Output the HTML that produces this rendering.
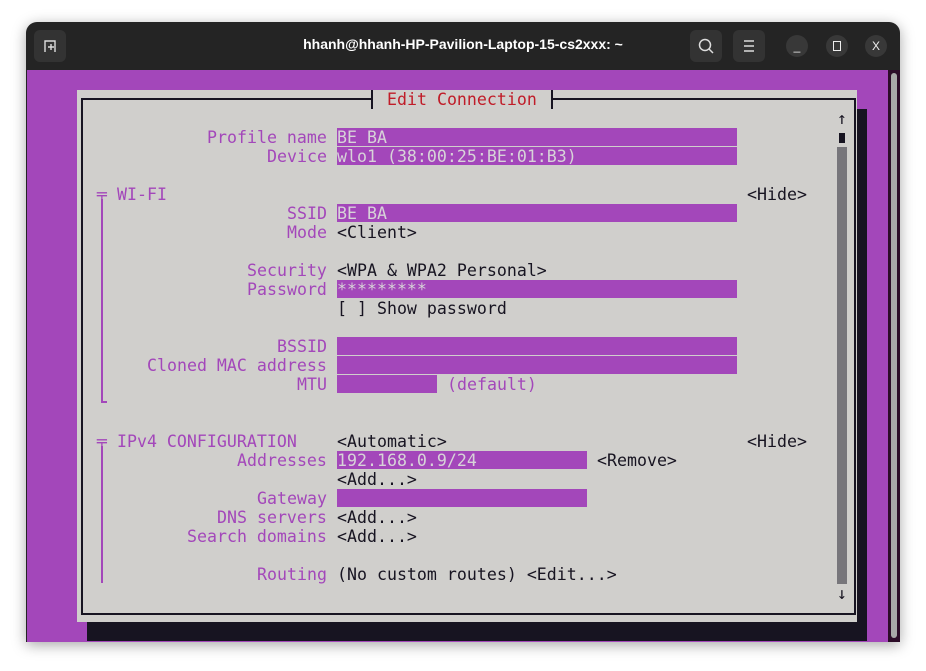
<!DOCTYPE html>
<html><head><style>
body{margin:0;width:926px;height:671px;background:#fff;position:relative;overflow:hidden;font-family:"DejaVu Sans Mono","Liberation Mono",monospace;}
.win{position:absolute;left:26px;top:22px;width:874px;height:620px;border-radius:11px 11px 0 0;background:#242424;box-shadow:0 3px 14px rgba(0,0,0,.35);overflow:hidden}
.t{position:absolute;font-size:16.6px;line-height:19px;height:19px;white-space:pre;color:#171421}
.p{color:#a347ba}
.f{position:absolute;height:18px;background:#a347ba}
.fv{position:absolute;font-size:16.6px;line-height:19px;white-space:pre;color:#d7d3d8}
.r{color:#c01c28}
.btn{position:absolute;top:8px;width:32px;height:32px;border-radius:6px;background:#333}
.cb{position:absolute;top:13px;width:22px;height:22px;border-radius:50%;background:#383838;color:#eee;font:12px "Liberation Sans",sans-serif;text-align:center;line-height:22px}
.abs{position:absolute}
</style></head><body>
<div class="win">
 <div class="btn" style="left:8px"><svg width="32" height="32"><path d="M11 22V11h10v11M14 17h6M17 14v6" stroke="#ddd" stroke-width="1.4" fill="none"/></svg></div>
 <div style="position:absolute;left:0;width:874px;top:14px;text-align:center;color:#fff;font:bold 14px 'Liberation Sans',sans-serif">hhanh@hhanh-HP-Pavilion-Laptop-15-cs2xxx: ~</div>
 <div class="btn" style="left:664px"><svg width="32" height="32"><circle cx="15" cy="15" r="5.5" stroke="#ddd" stroke-width="1.5" fill="none"/><path d="M19 19l4 4" stroke="#ddd" stroke-width="1.5"/></svg></div>
 <div class="btn" style="left:707px"><svg width="32" height="32"><path d="M11 11h10M11 16h10M11 21h10" stroke="#ddd" stroke-width="1.4"/></svg></div>
 <div class="cb" style="left:760px">_</div>
 <div class="cb" style="left:800px"><div style="position:absolute;left:7px;top:6px;width:6px;height:8px;border:1.5px solid #eee"></div></div>
 <div class="cb" style="left:839px">X</div>
 <div class="abs" style="left:1px;top:48px;width:861px;height:572px;background:#a347ba"></div>
 <div class="abs" style="left:862px;top:48px;width:12px;height:572px;background:#2c0c28"></div>
 <div class="abs" style="left:865px;top:51px;width:6px;height:565px;border-radius:3px;background:#a8a8a8"></div>
</div>
<div class="abs" style="left:857px;top:109px;width:10px;height:532px;background:#171421"></div>
<div class="abs" style="left:87px;top:622px;width:780px;height:19px;background:#171421"></div>
<div class="abs" style="left:77px;top:90px;width:780px;height:532px;background:#d0cfcc"></div>
<!-- border -->
<div class="abs" style="left:81px;top:98px;width:771px;height:513px;border:2px solid #171421"></div>
<div class="abs" style="left:372px;top:90px;width:180px;height:19px;background:#d0cfcc"></div>
<div class="abs" style="left:371px;top:90px;width:2px;height:19px;background:#171421"></div>
<div class="abs" style="left:551px;top:90px;width:2px;height:19px;background:#171421"></div>
<div class="t r" style="left:387px;top:90px">Edit Connection</div>
<!-- scrollbar -->
<div class="t" style="left:837px;top:109px">↑</div>
<div class="abs" style="left:839px;top:133px;width:6px;height:10px;background:#171421"></div>
<div class="abs" style="left:837px;top:147px;width:10px;height:437px;background:#77767b"></div>
<div class="t" style="left:837px;top:584px">↓</div>

<div class="t p" style="left:207px;top:128px">Profile name</div>
<div class="f" style="left:337px;top:128px;width:400px"></div><div class="fv" style="left:337px;top:128px">BE BA</div>
<div class="t p" style="left:267px;top:147px">Device</div>
<div class="f" style="left:337px;top:147px;width:400px"></div><div class="fv" style="left:337px;top:147px">wlo1 (38:00:25:BE:01:B3)</div>

<div class="t p" style="left:97px;top:185px">╤ WI-FI</div>
<div class="abs" style="left:101px;top:199px;width:2px;height:204px;background:#a347ba"></div>
<div class="abs" style="left:101px;top:401px;width:6px;height:2px;background:#a347ba"></div>
<div class="t" style="left:747px;top:185px">&lt;Hide&gt;</div>
<div class="t p" style="left:287px;top:204px">SSID</div>
<div class="f" style="left:337px;top:204px;width:400px"></div><div class="fv" style="left:337px;top:204px">BE BA</div>
<div class="t p" style="left:287px;top:223px">Mode</div>
<div class="t" style="left:337px;top:223px">&lt;Client&gt;</div>
<div class="t p" style="left:247px;top:261px">Security</div>
<div class="t" style="left:337px;top:261px">&lt;WPA &amp; WPA2 Personal&gt;</div>
<div class="t p" style="left:247px;top:280px">Password</div>
<div class="f" style="left:337px;top:280px;width:400px"></div><div class="fv" style="left:337px;top:280px">*********</div>
<div class="t" style="left:337px;top:299px">[ ] Show password</div>
<div class="t p" style="left:277px;top:337px">BSSID</div>
<div class="f" style="left:337px;top:337px;width:400px"></div>
<div class="t p" style="left:147px;top:356px">Cloned MAC address</div>
<div class="f" style="left:337px;top:356px;width:400px"></div>
<div class="t p" style="left:297px;top:375px">MTU</div>
<div class="f" style="left:337px;top:375px;width:100px"></div>
<div class="t p" style="left:447px;top:375px">(default)</div>

<div class="t p" style="left:97px;top:432px">╤ IPv4 CONFIGURATION</div>
<div class="abs" style="left:101px;top:446px;width:2px;height:137px;background:#a347ba"></div>
<div class="t" style="left:337px;top:432px">&lt;Automatic&gt;</div>
<div class="t" style="left:747px;top:432px">&lt;Hide&gt;</div>
<div class="t p" style="left:237px;top:451px">Addresses</div>
<div class="f" style="left:337px;top:451px;width:250px"></div><div class="fv" style="left:337px;top:451px">192.168.0.9/24</div>
<div class="t" style="left:597px;top:451px">&lt;Remove&gt;</div>
<div class="t" style="left:337px;top:470px">&lt;Add...&gt;</div>
<div class="t p" style="left:257px;top:489px">Gateway</div>
<div class="f" style="left:337px;top:489px;width:250px"></div>
<div class="t p" style="left:217px;top:508px">DNS servers</div>
<div class="t" style="left:337px;top:508px">&lt;Add...&gt;</div>
<div class="t p" style="left:187px;top:527px">Search domains</div>
<div class="t" style="left:337px;top:527px">&lt;Add...&gt;</div>
<div class="t p" style="left:257px;top:565px">Routing</div>
<div class="t" style="left:337px;top:565px">(No custom routes) &lt;Edit...&gt;</div>
</body></html>
